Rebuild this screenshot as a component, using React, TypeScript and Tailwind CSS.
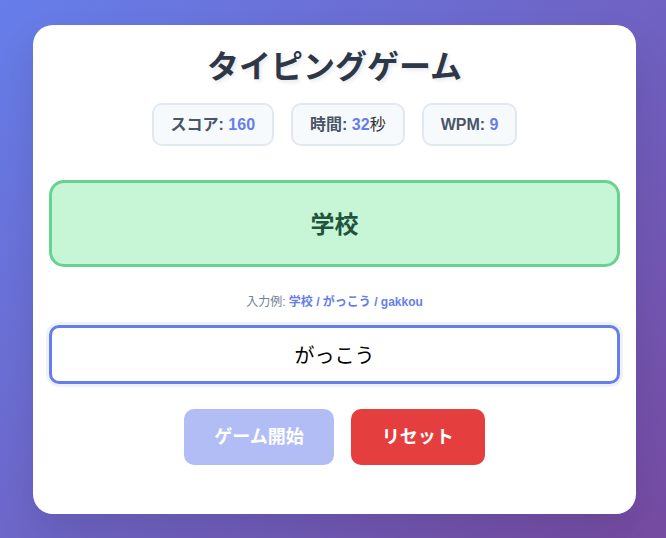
const font = { fontFamily: '"Liberation Sans", "Noto Sans CJK JP", sans-serif' };

const Stat = ({ label, value, unit }: { label: string; value: string; unit?: string }) => (
  <div className="rounded-[10px] border-2 border-[#e2e8f0] bg-[#f7fafc] px-[17px] py-[10px] text-base leading-[19px]">
    <span className="font-bold text-[#4a5568]">{label}: </span>
    <span className="font-bold text-[#667eea]">{value}</span>
    {unit && <span className="text-[#333]">{unit}</span>}
  </div>
);

export default function App() {
  return (
    <div
      className="flex min-h-screen items-center bg-[linear-gradient(135deg,#667eea_0%,#764ba2_100%)] pl-[33px] pr-[30px]"
      style={font}
    >
      <div className="flex h-[489px] w-full flex-col items-center rounded-[20px] bg-white px-4 pt-[23px] shadow-[0_20px_40px_rgba(0,0,0,0.1)]">
        <h1 className="text-[32px] font-bold leading-[38px] text-[#2d3748] [text-shadow:2px_2px_4px_rgba(0,0,0,0.1)]">
          タイピングゲーム
        </h1>

        <div className="mt-[17px] flex gap-[17px]">
          <Stat label="スコア" value="160" />
          <Stat label="時間" value="32" unit="秒" />
          <Stat label="WPM" value="9" />
        </div>

        <div className="mt-[34px] flex h-[87px] w-full items-center justify-center rounded-[15px] border-[3px] border-[#68d391] bg-[#c6f6d5] pt-1">
          <span className="text-2xl font-bold text-[#22543d]">学校</span>
        </div>

        <p className="mt-[28px] text-xs leading-[14px] text-[#718096]">
          入力例: <span className="font-bold text-[#667eea]">学校 / がっこう / gakkou</span>
        </p>

        <input
          readOnly
          value="がっこう"
          className="mt-[16px] h-[59px] w-full rounded-[10px] border-[3px] border-[#667eea] bg-white pt-px text-center text-xl text-black shadow-[0_0_0_3px_rgba(102,126,234,0.1)] outline-none"
          style={font}
        />

        <div className="mt-[25px] flex gap-[17px]">
          <button className="h-14 rounded-[10px] bg-[#667eea] px-[30px] text-lg font-bold text-white opacity-50">
            ゲーム開始
          </button>
          <button className="h-14 rounded-[10px] bg-[#e53e3e] px-[31px] text-lg font-bold text-white">
            リセット
          </button>
        </div>
      </div>
    </div>
  );
}
